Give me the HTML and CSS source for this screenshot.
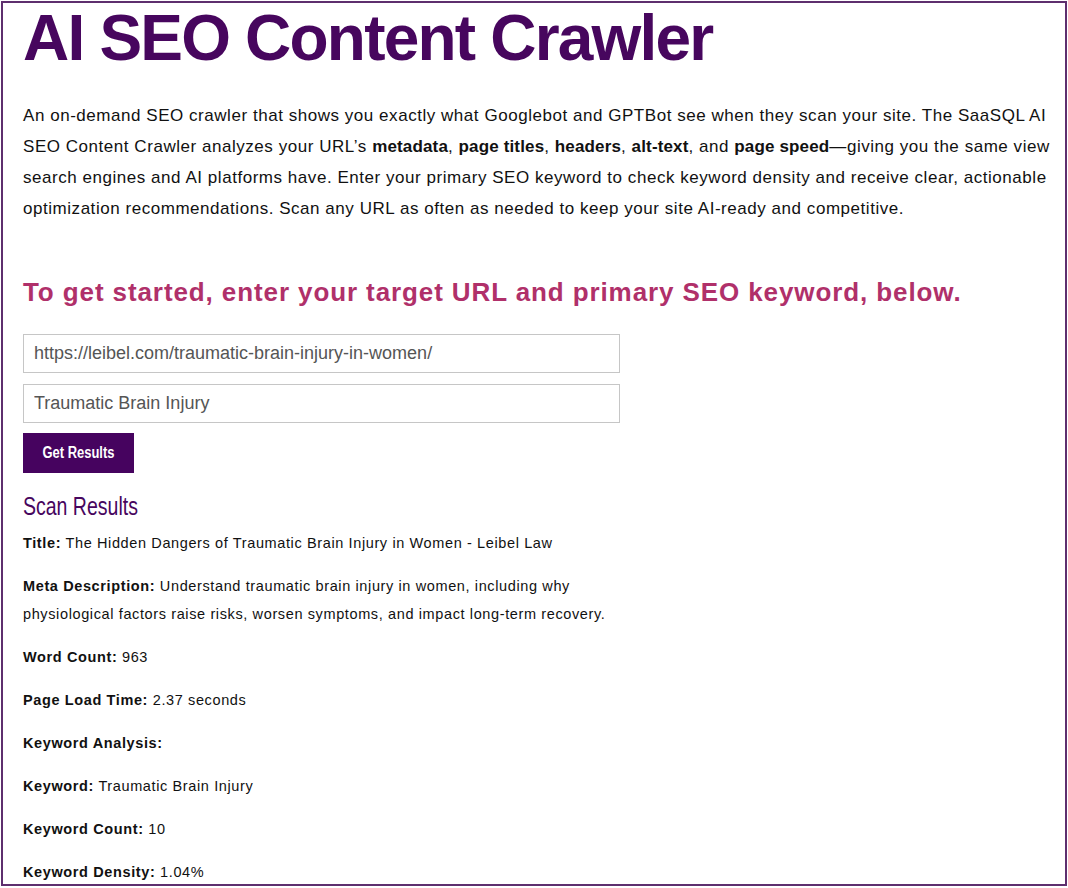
FILE: index.html
```html
<!DOCTYPE html>
<html lang="en">
<head>
<meta charset="utf-8">
<title>AI SEO Content Crawler</title>
<link rel="stylesheet" href="styles.css">
</head>
<body>
<div class="frame">
  <main class="content">
    <h1 class="title">AI SEO Content Crawler</h1>
    <p class="intro">An on-demand SEO crawler that shows you exactly what Googlebot and GPTBot see when they scan your site. The SaaSQL AI SEO Content Crawler analyzes your URL’s <b>metadata</b>, <b>page titles</b>, <b>headers</b>, <b>alt-text</b>, and <b>page speed</b>—giving you the same view search engines and AI platforms have. Enter your primary SEO keyword to check keyword density and receive clear, actionable optimization recommendations. Scan any URL as often as needed to keep your site AI-ready and competitive.</p>
    <h2 class="subtitle">To get started, enter your target URL and primary SEO keyword, below.</h2>
    <form class="scan-form">
      <input class="field" type="text" value="https://leibel.com/traumatic-brain-injury-in-women/">
      <input class="field" type="text" value="Traumatic Brain Injury">
      <button class="btn" type="button"><span class="btn-label">Get Results</span></button>
    </form>
    <section class="results">
      <h3 class="results-title"><span class="results-title-text">Scan Results</span></h3>
      <p><b>Title:</b> The Hidden Dangers of Traumatic Brain Injury in Women - Leibel Law</p>
      <p class="meta"><b>Meta Description:</b> Understand traumatic brain injury in women, including why physiological factors raise risks, worsen symptoms, and impact long-term recovery.</p>
      <p><b>Word Count:</b> 963</p>
      <p><b>Page Load Time:</b> 2.37 seconds</p>
      <p><b>Keyword Analysis:</b></p>
      <p><b>Keyword:</b> Traumatic Brain Injury</p>
      <p><b>Keyword Count:</b> 10</p>
      <p><b>Keyword Density:</b> 1.04%</p>
    </section>
  </main>
</div>
</body>
</html>
```

FILE: styles.css
```css
html, body {
  margin: 0;
  padding: 0;
  background: #ffffff;
}
body {
  font-family: "Liberation Sans", Arial, Helvetica, sans-serif;
  color: #111111;
}
.frame {
  margin: 1px;
  height: 881px;
  border: 2px solid #5e2f6e;
  overflow: hidden;
  box-sizing: content-box;
}
.content {
  padding: 0 2px 0 20px;
}
.title {
  margin: 0;
  font-size: 64px;
  line-height: 70px;
  font-weight: 700;
  color: #47065e;
  letter-spacing: -1.8px;
}
.intro {
  margin: 27px 0 0;
  font-size: 17px;
  line-height: 31px;
  letter-spacing: 0.54px;
  color: #111111;
}
.intro b {
  font-weight: 700;
  letter-spacing: 0.15px;
}
.subtitle {
  margin: 51px 0 0;
  font-size: 26px;
  line-height: 34px;
  font-weight: 700;
  letter-spacing: 0.9px;
  color: #b0306a;
}
.scan-form {
  margin-top: 25px;
  display: flex;
  flex-direction: column;
  align-items: flex-start;
  gap: 11px;
}
.field {
  width: 597px;
  height: 39px;
  box-sizing: border-box;
  border: 1px solid #c6c6c6;
  border-radius: 0;
  padding: 0 10px;
  font-family: "Liberation Sans", Arial, sans-serif;
  font-size: 18px;
  color: #555555;
  background: #ffffff;
  margin: 0;
  outline: none;
}
.btn {
  width: 111px;
  height: 40px;
  margin-top: -1px;
  border: 0;
  background: #46035f;
  color: #ffffff;
  font-family: "Liberation Sans", Arial, sans-serif;
  font-weight: 700;
  font-size: 16px;
  cursor: pointer;
  padding: 0;
  display: flex;
  align-items: center;
  justify-content: center;
}
.btn-label {
  display: inline-block;
  transform: scaleX(0.81);
}
.results-title {
  margin: 18px 0 0;
  font-weight: 400;
  font-size: 26px;
  line-height: 30px;
  color: #47065e;
}
.results-title-text {
  display: inline-block;
  transform: scaleX(0.75);
  transform-origin: left center;
}
.results p {
  margin: 15px 0 0;
  font-size: 14.5px;
  line-height: 28px;
  letter-spacing: 0.62px;
  color: #111111;
}
.results p:first-of-type {
  margin-top: 8px;
}
.results .meta {
  max-width: 600px;
}
```
